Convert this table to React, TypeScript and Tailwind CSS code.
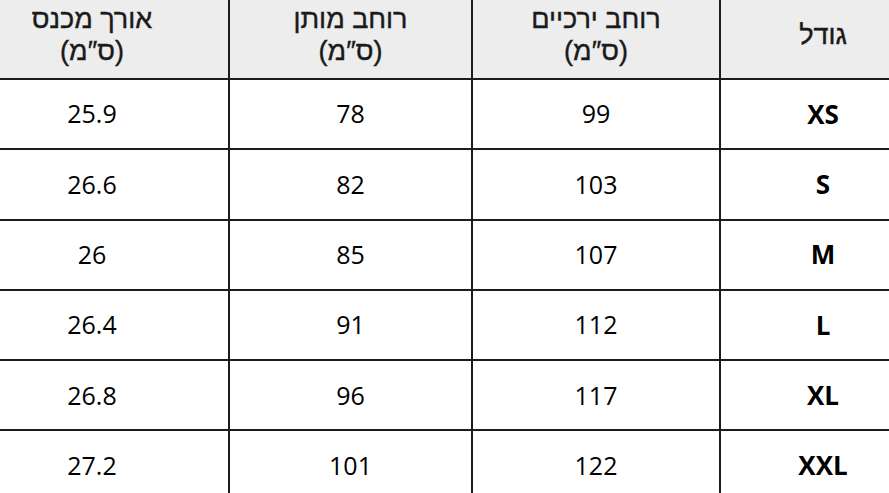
const headers = [
  { lines: ["גודל"] },
  { lines: ["רוחב ירכיים", "(ס″מ)"] },
  { lines: ["רוחב מותן", "(ס″מ)"] },
  { lines: ["אורך מכנס", "(ס″מ)"] },
];

const rows = [
  ["XS", "99", "78", "25.9"],
  ["S", "103", "82", "26.6"],
  ["M", "107", "85", "26"],
  ["L", "112", "91", "26.4"],
  ["XL", "117", "96", "26.8"],
  ["XXL", "122", "101", "27.2"],
];

export default function App() {
  return (
    <div
      className="h-[493px] w-[889px] overflow-hidden bg-white text-black"
      style={{ fontFamily: '"Open Sans", "Noto Sans", "DejaVu Sans", sans-serif' }}
    >
      <div dir="rtl" className="ml-[-44px] w-[969px]">
        <div className="grid h-[80px] grid-cols-[206px_248px_243px_272px] border-b-2 border-[#1c1c1c] bg-[#ededed]">
          {headers.map((h, i) => (
            <div
              key={i}
              className={`flex flex-col items-center justify-center pb-[9px] text-[27px] leading-[32px] text-[#1a1a1a] font-['Liberation_Sans',sans-serif] [-webkit-text-stroke:0.4px_#1a1a1a] ${
                i < 3 ? "border-l-2 border-[#1c1c1c]" : ""
              }`}
            >
              {h.lines.map((l) => (
                <span key={l}>{l}</span>
              ))}
            </div>
          ))}
        </div>
        {rows.map((r) => (
          <div
            key={r[0]}
            className="grid h-[70.3px] grid-cols-[206px_248px_243px_272px] border-b-2 border-[#1c1c1c]"
          >
            {r.map((c, i) => (
              <div
                key={i}
                className={`flex items-center justify-center text-[25px] ${
                  i === 0 ? "font-bold text-[26px]" : ""
                } ${i < 3 ? "border-l-2 border-[#1c1c1c]" : ""}`}
              >
                {c}
              </div>
            ))}
          </div>
        ))}
      </div>
    </div>
  );
}
